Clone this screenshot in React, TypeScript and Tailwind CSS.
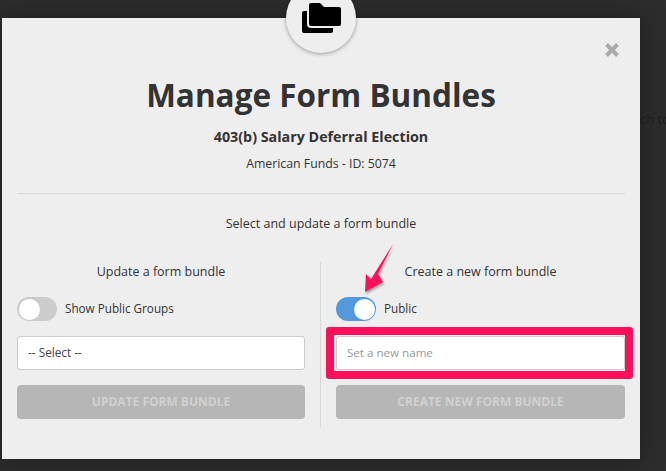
export default function App() {
  return (
    <div className="relative w-[666px] h-[471px] overflow-hidden bg-[#2d2d2d] font-['Source_Sans_Pro','Open_Sans',sans-serif] text-[#333]">
      {/* page behind the overlay */}
      <div className="absolute z-10 left-[640px] top-[111px] text-[13px] leading-4 text-[#1c1c1c] whitespace-nowrap">ch to</div>

      <div className="relative ml-[2px] mt-[18px] w-[638px] h-[441px] bg-[#eeeeee] shadow-[0_0_24px_rgba(0,0,0,0.35)]">
        {/* Folder badge */}
        <div className="absolute left-[284px] top-[-53px] w-[70px] h-[88px] flex items-end justify-center">
          <div className="w-[70px] h-[70px] rounded-full bg-[#eeeeee] shadow-[0_1px_4px_rgba(0,0,0,0.35)] flex items-center justify-center">
            <svg width="40" height="34" viewBox="0 0 40 34">
              <path d="M1 12a2 2 0 0 1 2-2h3v13a4 4 0 0 0 4 4h22v3a2 2 0 0 1-2 2H3a2 2 0 0 1-2-2z" fill="#000" />
              <path d="M8 4a2 2 0 0 1 2-2h9l4 4h15a2 2 0 0 1 2 2v15a2 2 0 0 1-2 2H10a2 2 0 0 1-2-2z" fill="#000" />
            </svg>
          </div>
        </div>

        <svg width="16" height="16" viewBox="0 0 16 16" className="absolute left-[602px] top-[24px]">
          <path d="M2.5 2.5l11 11M13.5 2.5l-11 11" stroke="#aaaaaa" strokeWidth="4" />
        </svg>

        <div className="flex flex-col items-center px-[15px]">
          <h1 className="mt-[55px] text-[31.5px] leading-[44px] font-bold text-[#333]">Manage Form Bundles</h1>
          <h2 className="mt-[10px] text-[14.3px] leading-5 font-bold">403(b) Salary Deferral Election</h2>
          <p className="mt-[7px] text-[12.3px] leading-5">American Funds - ID: 5074</p>
          <div className="mt-[19px] w-full h-px bg-[#d9d9d9]" />
          <p className="mt-[20px] text-[12.5px] leading-5">Select and update a form bundle</p>

          <div className="mt-[28px] w-full flex">
            <div className="w-[303px] pr-[15px] flex flex-col h-[166px]">
              <p className="text-center text-[12.5px] leading-5">Update a form bundle</p>
              <div className="mt-[15px] flex items-center gap-[8px] h-6">
                <div className="w-[40px] h-[24px] rounded-full bg-[#cccccc] p-[1.5px] flex">
                  <div className="w-[21px] h-[21px] rounded-full bg-white" />
                </div>
                <span className="text-[11.7px]">Show Public Groups</span>
              </div>
              <div className="mt-[15px] h-[34px] rounded-[3px] border border-[#cccccc] bg-white flex items-center px-[10px] text-[11.8px] text-[#444]">-- Select --</div>
              <div className="mt-[15px] h-[34px] rounded-[4px] bg-[#b6b6b6] flex items-center justify-center text-[12px] font-bold text-[#d0d0d0]">UPDATE FORM BUNDLE</div>
            </div>

            <div className="flex-1 border-l border-[#d9d9d9] pl-[15px] flex flex-col h-[166px]">
              <p className="text-center text-[12.5px] leading-5">Create a new form bundle</p>
              <div className="mt-[15px] flex items-center gap-[8px] h-6">
                <div className="w-[40px] h-[24px] rounded-full bg-[#5599dd] p-[1.5px] flex justify-end">
                  <div className="w-[21px] h-[21px] rounded-full bg-white" />
                </div>
                <span className="text-[11.7px]">Public</span>
              </div>
              <div className="mt-[15px] h-[34px] rounded-[3px] border border-[#cccccc] bg-white flex items-center px-[10px] text-[11.6px] text-[#999]">Set a new name</div>
              <div className="mt-[15px] h-[34px] rounded-[4px] bg-[#b6b6b6] flex items-center justify-center text-[12px] font-bold text-[#d0d0d0]">CREATE NEW FORM BUNDLE</div>
            </div>
          </div>
        </div>

        {/* Annotations on top of the shot */}
        <div className="absolute left-[324px] top-[309px] w-[307px] h-[52px] rounded-[3px] border-[8px] border-[#ff0f5b]" />
        <svg width="40" height="56" viewBox="0 0 40 56" className="absolute left-[360px] top-[224px] drop-shadow-[1px_2px_1px_rgba(0,0,0,0.35)]">
          <path d="M31 2 L16 32 L21 40 L3 50 L4 32 L9 37 Z" fill="#ff0f5b" />
        </svg>
      </div>
    </div>
  );
}
